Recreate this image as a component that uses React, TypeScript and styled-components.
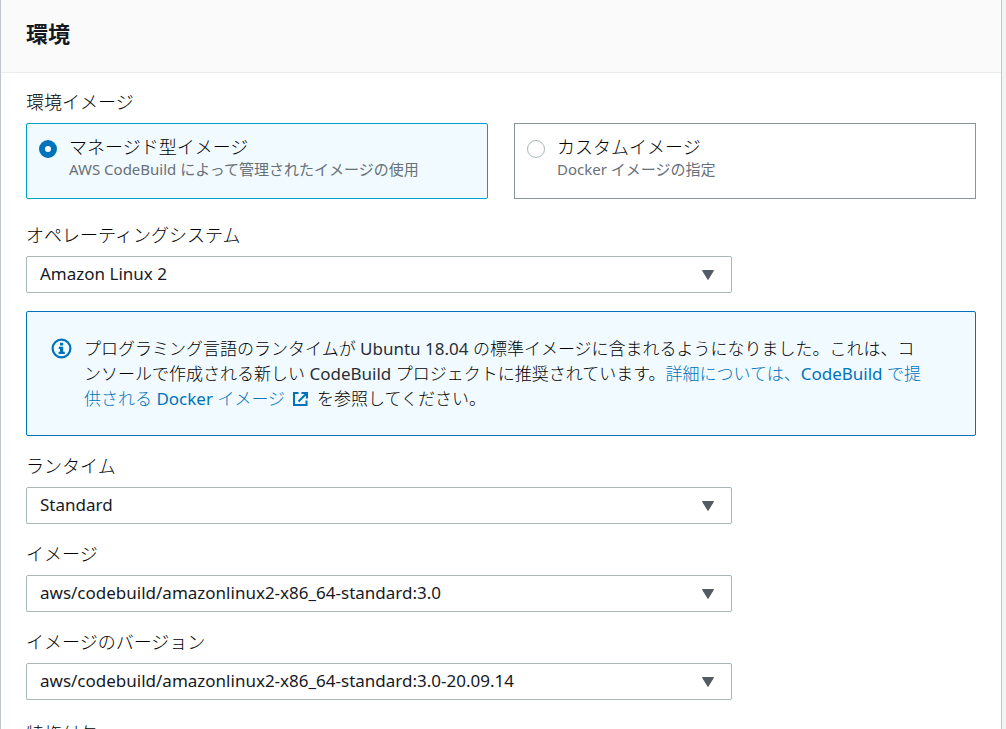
import React, { useState } from "react";
import styled, { createGlobalStyle } from "styled-components";

const GlobalStyle = createGlobalStyle`
  *, *::before, *::after { box-sizing: border-box; }
  html { background: #f2f3f3; }
  body {
    margin: 0;
    color: #16191f;
    font-family: "Noto Sans", "Noto Sans CJK JP", sans-serif;
    font-size: 17px;
    line-height: 25px;
  }
`;

const Panel = styled.section`
  min-height: 100vh;
  margin-right: 4px;
  background: #ffffff;
  border-left: 1px solid #c0c5cb;
  border-right: 1px solid #c0c5cb;
`;

const PanelHeader = styled.header`
  padding: 17px 25px 23px;
  background: #fafafa;
  border-bottom: 1px solid #eaeded;
`;

const Title = styled.h2`
  margin: 0;
  font-size: 22px;
  line-height: 32px;
  font-weight: 700;
`;

const Form = styled.form`
  display: flex;
  flex-direction: column;
  gap: 22px;
  padding: 17px 25px 25px;
`;

const Fields = styled.div`
  display: flex;
  flex-direction: column;
  gap: 18px;
`;

const Group = styled.fieldset`
  margin: 0;
  padding: 0 0 2px;
  border: 0;
  min-width: 0;
`;

const Legend = styled.legend`
  padding: 0 0 8px;
  color: #000000;
  font-size: 18px;
  font-weight: 300;
`;

const Tiles = styled.div`
  display: grid;
  grid-template-columns: 1fr 1fr;
  gap: 26px;
`;

const Tile = styled.label<{ $selected: boolean }>`
  display: flex;
  gap: 12px;
  min-height: 76px;
  padding: 11px 12px;
  border: 1px solid ${(p) => (p.$selected ? "#00a1c9" : "#879596")};
  border-radius: ${(p) => (p.$selected ? "2px" : "0")};
  background: ${(p) => (p.$selected ? "#f1faff" : "#ffffff")};
`;

const Radio = styled.input`
  appearance: none;
  flex: none;
  width: 18px;
  height: 18px;
  margin: 5px 0 0;
  border: 1px solid #aab7b8;
  border-radius: 50%;
  background: #ffffff;
  &:checked { border: 6px solid #0073bb; }
`;

const TileText = styled.span`
  display: flex;
  flex-direction: column;
`;

const TileName = styled.span`
  color: #000000;
  font-size: 18px;
  line-height: 25px;
  font-weight: 300;
`;

const TileHint = styled.span`
  color: #687078;
  font-size: 15px;
  line-height: 18px;
`;

const Field = styled.div`
  display: flex;
  flex-direction: column;
  gap: 8px;
  width: 75%;
  max-width: 706px;
`;

const Label = styled.label`
  color: #000000;
  font-size: 18px;
  line-height: 25px;
  font-weight: 300;
`;

const SelectBox = styled.div`
  display: grid;
  align-items: center;
  & > * { grid-area: 1 / 1; }
`;

const Select = styled.select`
  appearance: none;
  width: 100%;
  height: 37px;
  padding: 0 40px 2px 13px;
  border: 1px solid #aab7b8;
  border-radius: 2px;
  background: #ffffff;
  color: #16191f;
  font: inherit;
`;

const Caret = styled.svg`
  justify-self: end;
  margin-right: 17px;
  pointer-events: none;
`;

const Alert = styled.div`
  display: flex;
  gap: 12px;
  padding: 24px 48px 24px 24px;
  border: 1px solid #0073bb;
  border-radius: 2px;
  background: #f1faff;
`;

const AlertIcon = styled.svg`
  flex: none;
  margin-top: 2px;
`;

const AlertText = styled.p`
  margin: 0;
  color: #000000;
  font-size: 17px;
  line-height: 25px;
  font-weight: 300;
`;

const Latin = styled.span`
  color: #2a2e36;
  font-weight: 400;
`;

const Link = styled.a`
  color: #0073bb;
  text-decoration: none;
  ${Latin} { color: inherit; }
`;

const ExternalIcon = styled.svg`
  margin: 0 3px;
  vertical-align: -2px;
`;

function SelectField(props: { id: string; label: string; value: string }) {
  return (
    <Field>
      <Label htmlFor={props.id}>{props.label}</Label>
      <SelectBox>
        <Select id={props.id} defaultValue={props.value}>
          <option>{props.value}</option>
        </Select>
        <Caret width="14" height="12" viewBox="0 0 14 12" aria-hidden="true">
          <path d="M1.5 1.5h11L7 10.500z" fill="#545b64" stroke="#545b64" strokeWidth="1" strokeLinejoin="round" />
        </Caret>
      </SelectBox>
    </Field>
  );
}

const imageKinds = [
  { id: "managed", name: "マネージド型イメージ", hint: "AWS CodeBuild によって管理されたイメージの使用" },
  { id: "custom", name: "カスタムイメージ", hint: "Docker イメージの指定" },
];

export default function App() {
  const [kind, setKind] = useState("managed");
  return (
    <>
      <GlobalStyle />
      <Panel>
        <PanelHeader>
          <Title lang="ja">環境</Title>
        </PanelHeader>
        <Form lang="ja">
          <Group>
            <Legend>環境イメージ</Legend>
            <Tiles>
              {imageKinds.map((k) => (
                <Tile key={k.id} $selected={kind === k.id}>
                  <Radio type="radio" name="image-kind" checked={kind === k.id} onChange={() => setKind(k.id)} />
                  <TileText>
                    <TileName>{k.name}</TileName>
                    <TileHint>{k.hint}</TileHint>
                  </TileText>
                </Tile>
              ))}
            </Tiles>
          </Group>
          <Fields>
            <SelectField id="os" label="オペレーティングシステム" value="Amazon Linux 2" />
            <Alert>
              <AlertIcon width="21" height="21" viewBox="0 0 21 21" aria-hidden="true">
                <circle cx="10.500" cy="10.500" r="8.900" fill="none" stroke="#0073bb" strokeWidth="2.200" />
                <path d="M9 4.800h3.200v2.800H9zM7.800 8.800h4.400v5h1.600V16h-6.200v-2.200H9V11H7.800z" fill="#0073bb" />
              </AlertIcon>
              <AlertText>
                プログラミング言語のランタイムが <Latin>Ubuntu 18.04</Latin>{" "}
                の標準イメージに含まれるようになりました。これは、コンソールで作成される新しい <Latin>CodeBuild</Latin>{" "}
                プロジェクトに推奨されています。
                <Link href="#docker-images">
                  詳細については、<Latin>CodeBuild</Latin> で提供される <Latin>Docker</Latin> イメージ{" "}
                  <ExternalIcon width="17" height="16" viewBox="0 0 17 16" fill="none" stroke="#0073bb" strokeWidth="2" aria-hidden="true">
                    <path d="M6.500 2H2v12h12.500V9.500M9.500 2h5.500v5.500M15 2L6.500 10.500" />
                  </ExternalIcon>
                </Link>{" "}
                を参照してください。
              </AlertText>
            </Alert>
            <SelectField id="runtime" label="ランタイム" value="Standard" />
            <SelectField id="image" label="イメージ" value="aws/codebuild/amazonlinux2-x86_64-standard:3.0" />
            <SelectField id="version" label="イメージのバージョン" value="aws/codebuild/amazonlinux2-x86_64-standard:3.0-20.09.14" />
          </Fields>
          <Group>
            <Legend>特権付与</Legend>
          </Group>
        </Form>
      </Panel>
    </>
  );
}
